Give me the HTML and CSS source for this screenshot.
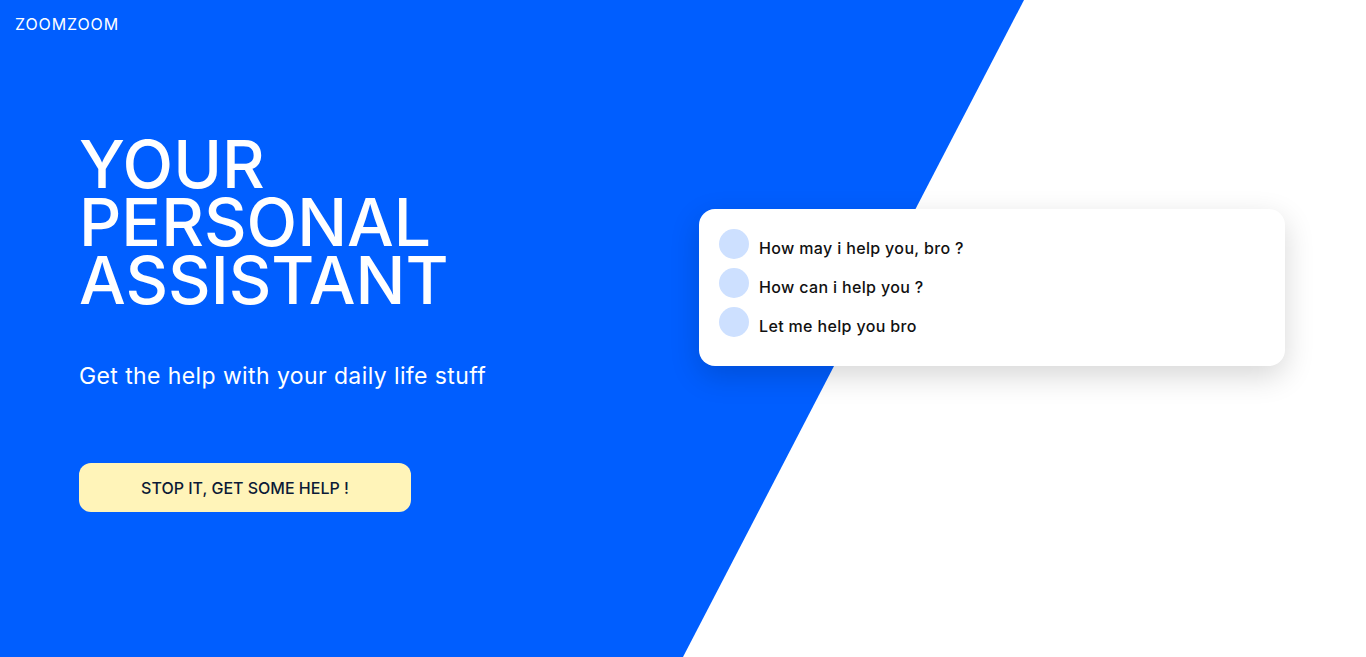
FILE: index.html
```html
<!DOCTYPE html>
<html lang="en">
<head>
<meta charset="utf-8">
<title>ZOOMZOOM</title>
<link rel="stylesheet" href="styles.css">
</head>
<body>
<div class="page">
  <header class="header">ZOOMZOOM</header>
  <main class="hero">
    <section class="intro">
      <h1 class="title"><span class="line">YOUR</span><span class="line">PERSONAL</span><span class="line">ASSISTANT</span></h1>
      <p class="subtitle">Get the help with your daily life stuff</p>
      <button class="cta">STOP IT, GET SOME HELP !</button>
    </section>
    <section class="chat">
      <div class="chat-row"><span class="avatar"></span><span class="msg">How may i help you, bro ?</span></div>
      <div class="chat-row"><span class="avatar"></span><span class="msg">How can i help you ?</span></div>
      <div class="chat-row"><span class="avatar"></span><span class="msg">Let me help you bro</span></div>
    </section>
  </main>
</div>
</body>
</html>
```
FILE: styles.css
```css
* { box-sizing: border-box; }
html, body { margin: 0; padding: 0; }
body {
  font-family: Inter, "Open Sans", "Liberation Sans", sans-serif;
  background: #fff;
}
.page {
  position: relative;
  width: 1366px;
  height: 657px;
  overflow: hidden;
  background: #fff;
}
.page::before {
  content: "";
  position: absolute;
  inset: 0;
  background: #005eff;
  clip-path: polygon(0 0, 1024px 0, 683px 100%, 0 100%);
  z-index: 0;
}
.header, .hero { position: relative; z-index: 1; }
.header {
  height: 46px;
  padding: 14px 15px 0;
  font-size: 16px;
  line-height: 20px;
  letter-spacing: 0.9px;
  color: #fff;
}
.hero {
  display: flex;
  padding: 89px 0 0 79px;
}
.intro {
  width: 620px;
  flex: none;
}
.title {
  margin: 0;
  font-size: 66px;
  font-weight: 500;
  color: #fff;
}
.line {
  display: block;
  height: 58px;
  line-height: 58px;
}
.subtitle {
  margin: 54px 0 0;
  font-size: 23px;
  line-height: 26px;
  letter-spacing: 0.4px;
  color: #fff;
}
.cta {
  display: flex;
  align-items: center;
  justify-content: center;
  margin-top: 74px;
  width: 332px;
  height: 49px;
  border: 0;
  border-radius: 12px;
  background: #fff4b9;
  color: #0c1a36;
  font-family: inherit;
  font-size: 16px;
  font-weight: 500;
  padding: 0;
}
.chat {
  margin-top: 74px;
  width: 586px;
  height: 157px;
  padding: 20px;
  background: #fff;
  border-radius: 16px;
  box-shadow: 0 10px 30px rgba(0, 0, 0, 0.16);
  align-self: flex-start;
}
.chat-row {
  display: flex;
  align-items: center;
  gap: 10px;
  height: 30px;
  margin-bottom: 9px;
}
.avatar {
  width: 30px;
  height: 30px;
  border-radius: 50%;
  background: #cde0ff;
  flex: none;
}
.msg {
  padding-top: 8px;
  font-size: 16px;
  font-weight: 500;
  letter-spacing: 0.35px;
  color: #111;
}
```
